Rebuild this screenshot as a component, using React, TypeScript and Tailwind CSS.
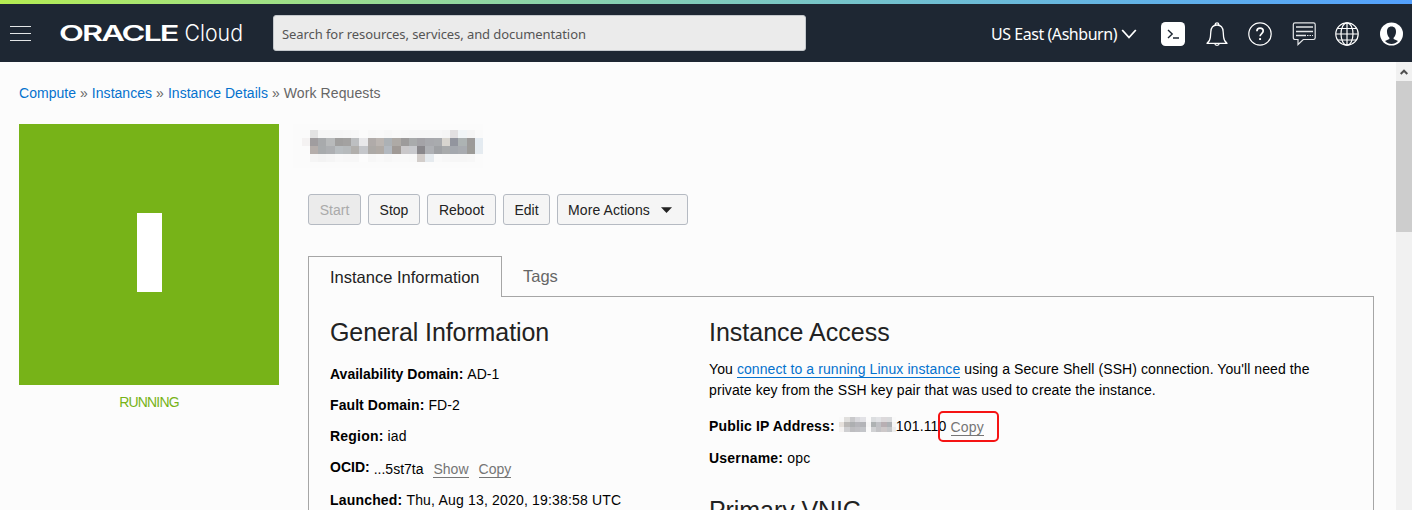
import React from "react";

const sans = "font-['Liberation_Sans',Arial,sans-serif]";

type Cell = [number, number, string];

const titleRows: string[][] = [
  ["#e3e3e3", "#f6f6f6", "#f6f6f6", "#f6f6f6", "#f7f7f7", "#f8f8f8", "#fbfbfb", "#f8f8f8", "#f9f9f9", "#f7f7f7", "#f9f9f9", "#f8f8f8", "#f7f7f7", "#f7f7f7", "#f7f7f7", "#f7f7f7", "#f5f5f5", "#e2e0e1", "#f1f5f7", "#f5f5f5", "#fafafa"],
  ["#a09d9f", "#a8aaac", "#b8babb", "#a09f9e", "#a3a2a1", "#bdbfc1", "#e8e8ea", "#b0aba9", "#bbb5b1", "#acb1b5", "#aeaaa6", "#9d9b9b", "#a9abac", "#a4a3a7", "#a8a9ad", "#a9abae", "#d8d5cf", "#92959e", "#adb3b3", "#9c9a99", "#e4ebf1"],
  ["#b5aeab", "#a8abad", "#adafb2", "#b8bdc0", "#b6babc", "#b1afac", "#c4c6ca", "#aca9a6", "#b0aaa5", "#b2b8bf", "#a09a96", "#cac8ca", "#c8c9cd", "#89878b", "#aeb0b4", "#9fa1a4", "#a8aaab", "#a4a8ae", "#a8abb0", "#9c9b98", "#e5ebf0"],
  ["#f5f5f5", "#f3f3f3", "#f5f5f5", "#f8f8f8", "#f7f7f7", "#f7f7f7", "#fcfcfc", "#f7f7f7", "#f9f9f9", "#f7f7f7", "#f9f9f9", "#f9f9f9", "#f8f8f8", "#d2cdca", "#e5eaee", "#f9f9f9", "#f7f7f7", "#f6f6f6", "#f6f6f6", "#f7f7f7", "#fbfbfb"],
];

const addressRows: string[][] = [
  ["#fafafa", "#e0dfdd", "#c9c9cb", "#d9d9dd", "#e2e2e6", "#fbfbfb", "#dcdee0", "#e2e3e6", "#dcd9db", "#d9dadc", "#fafafa"],
  ["#e6e1dc", "#bbb9b7", "#adafb1", "#b5b5ba", "#b3b4b8", "#f6f6f6", "#aeb2b3", "#c0c1c5", "#b8afb3", "#adb1b5", "#f5f5f5"],
  ["#f5f3f2", "#cfcfd1", "#bdbdc0", "#c0c0c4", "#c3c5c9", "#fafafa", "#d0d1d3", "#c3c3c6", "#cdc8c9", "#c3c5c8", "#ececec"],
];

function Mosaic({ cells, size }: { cells: Cell[]; size: number }) {
  return (
    <g shapeRendering="crispEdges">
      {cells.map(([x, y, c]) => (
        <rect key={`${x}-${y}`} x={x} y={y} width={size} height={size} fill={c} />
      ))}
    </g>
  );
}

function HiddenTitle() {
  const cells: Cell[] = titleRows.flatMap((row, r) =>
    row.map((c, i): Cell => [17 + i * 8.24, 6 + r * 8, c]),
  );
  return (
    <svg className="block" width="190" height="48" viewBox="0 0 190 48">
      <rect x="0" y="0" width="190" height="44" fill="#fbfbfb" />
      <rect x="9" y="14" width="8" height="8" fill="#f4f2f2" />
      <Mosaic cells={cells} size={8.24} />
    </svg>
  );
}

function HiddenAddress() {
  const cells: Cell[] = addressRows.flatMap((row, r) =>
    row.map((c, i): Cell => [i * 5.3, 1 + r * 5, c]),
  );
  return (
    <svg className="block shrink-0" width="57" height="18" viewBox="0 0 57 18">
      <Mosaic cells={cells} size={5.3} />
    </svg>
  );
}

function Logo() {
  return (
    <svg width="190" height="30" viewBox="0 0 190 30" fill="#fff" className="block shrink-0">
      <text x="0" y="23" fontFamily="Inter, sans-serif" fontWeight="600" fontSize="21.500" letterSpacing="-1.300" textLength="118.500" lengthAdjust="spacingAndGlyphs">ORACLE</text>
      <text x="125.500" y="23" fontFamily="Inter, sans-serif" fontWeight="300" fontSize="22.500" textLength="58.500" lengthAdjust="spacingAndGlyphs">Cloud</text>
    </svg>
  );
}

function HeaderIcons() {
  return (
    <div className="flex items-center gap-[19.5px] pt-px">
      <svg width="24" height="24" viewBox="0 0 24 24" fill="none">
        <rect width="24" height="24" rx="4.5" fill="#fff" />
        <path d="M7 8l4.2 4L7 16M12 16h6" stroke="#1e2733" strokeWidth="1.4" />
      </svg>
      <svg width="24" height="24" viewBox="0 0 24 24" fill="none" stroke="#fff" strokeWidth="1.3" strokeLinejoin="round">
        <path d="M2 21.3c2.1-1.5 3.1-3.2 3.4-6.3l.4-5C6 5.800 8.200 3 12 3s6 2.800 6.200 7l.4 5c.3 3.100 1.300 4.800 3.400 6.300z" />
        <path d="M10.300 3.100V2.300c0-2 3.400-2 3.400 0v.8M9.800 21.500c.2 2.400 4.200 2.400 4.400 0" />
      </svg>
      <svg width="24" height="24" viewBox="0 0 24 24" fill="none" stroke="#fff">
        <circle cx="12" cy="12" r="11.200" strokeWidth="1.200" />
        <path d="M8.900 9.300c0-4.200 6.300-4 6.300-.2 0 2.500-3.100 2.500-3.100 5.200" strokeWidth="1.700" />
        <path d="M12.100 16.100v1.900" strokeWidth="1.900" />
      </svg>
      <svg width="24" height="24" viewBox="0 0 24 24" fill="none" stroke="#e4e6e8">
        <path d="M3 .8h18.500c1 0 1.700.7 1.700 1.700v13.300c0 1-.7 1.700-1.700 1.700H11.300L6 22.500v-5H3c-1 0-1.700-.7-1.700-1.700V2.500C1.300 1.500 2 .8 3 .8z" strokeWidth="1.200" />
        <path d="M4 5h17M4 9.500h17M4 13.500h10" strokeWidth="1.300" />
        <path d="M15 13.500h6" strokeWidth="1.200" strokeDasharray="1.500 1" />
      </svg>
      <svg width="24" height="24" viewBox="0 0 24 24" fill="none" stroke="#fff" strokeWidth="1.200">
        <circle cx="12" cy="12" r="11.200" />
        <ellipse cx="12" cy="12" rx="6" ry="11.200" />
        <path d="M12 1v22M3 6.500h18M1 12h22M3 18h18" />
      </svg>
      <svg width="24" height="24" viewBox="0 0 24 24" fill="none">
        <circle cx="12.500" cy="12" r="11.500" fill="#fff" />
        <path d="M12.500 4.500c3 0 4.700 2.200 4.500 5.500-.1 2.500-1 4.600-2.400 5.700v1.200l4.400 2.200c-3.500 4-9.500 4-13 0l4.400-2.200v-1.200C9 14.600 8.100 12.500 8 10c-.2-3.300 1.500-5.500 4.500-5.500z" fill="#1e2733" />
      </svg>
    </div>
  );
}

function Header() {
  return (
    <header className="flex h-[58px] items-center bg-[#1e2733] text-white">
      <svg width="22" height="18" viewBox="0 0 22 18" className="ml-[10px] shrink-0" stroke="#e3e5e6" strokeWidth="1.200">
        <path d="M0 2.500h21M0 9.500h21M0 16.500h21" />
      </svg>
      <div className="ml-[27px] w-[214px]"><Logo /></div>
      <div className="flex h-9 w-[533px] items-center rounded-[3px] border border-[#c4c8cc] bg-[#ebebeb] pl-2 pt-[4px] font-['Noto_Sans',sans-serif] text-[13px] tracking-[-0.08px] text-[#555]">
        Search for resources, services, and documentation
      </div>
      <div className="ml-[185px] flex w-[170px] items-center gap-[4px] whitespace-nowrap pt-[2px] font-['Noto_Sans',sans-serif] text-[16px] tracking-[-0.45px]">
        US East (Ashburn)
        <svg width="16" height="10" viewBox="0 0 15 10" fill="none" stroke="#fff" strokeWidth="1.800" className="shrink-0">
          <path d="M.7 1l6.800 7.500L14.300 1" />
        </svg>
      </div>
      <HeaderIcons />
    </header>
  );
}

function Action({ className, children }: { className: string; children: React.ReactNode }) {
  return (
    <button className={`flex h-[31px] items-center justify-center rounded-[3px] border border-[#b5bac2] pt-px text-[14px] ${className}`}>
      {children}
    </button>
  );
}

function Field({ label, children, className }: { label: string; children: React.ReactNode; className: string }) {
  return (
    <div className={`flex h-[21px] whitespace-pre text-[14px] leading-[21px] text-black ${className}`}>
      <b className="mr-[4px]">{label}:</b>
      {children}
    </div>
  );
}

function TextButton({ children }: { children: string }) {
  return <span><a className="border-b border-[#757575] text-[#757575]">{children}</a></span>;
}

export default function App() {
  return (
    <div className={`flex h-[510px] w-[1412px] flex-col overflow-hidden bg-[#fcfcfc] ${sans}`}>
      <div className="h-1 shrink-0 bg-linear-to-r from-[#b4ec51] to-[#53a0fd]" />
      <Header />
      <div className="flex min-h-0 flex-1">
        <main className="min-w-0 flex-1 overflow-hidden pl-[19px]">
          <nav className="mt-[21px] flex gap-1 text-[14px] leading-[20px] tracking-[0.03px] text-[#666]">
            <a className="text-[#0572ce]">Compute</a>»
            <a className="text-[#0572ce]">Instances</a>»
            <a className="text-[#0572ce]">Instance Details</a>»
            <span className="tracking-[0.1px]">Work Requests</span>
          </nav>
          <div className="mt-[21px] flex">
            <div className="w-[260px] shrink-0">
              <div className="flex h-[260.500px] items-start justify-center bg-[#77b318] pt-[89px]">
                <div className="h-[79px] w-[25px] bg-white" />
              </div>
              <p className="mt-[7.5px] text-center text-[14px] leading-[20px] tracking-[-0.8px] text-[#77b318]">RUNNING</p>
            </div>
            <div className="ml-[29px] w-[1066px] shrink-0">
              <div className="-ml-[15px] h-[70px]"><HiddenTitle /></div>
              <div className="flex gap-[7px] text-[#222]">
                <Action className="w-[53px] bg-[#ebebeb] text-[#aaa]">Start</Action>
                <Action className="w-[52px] bg-[#f5f5f5]">Stop</Action>
                <Action className="w-[69px] bg-[#f5f5f5]">Reboot</Action>
                <Action className="w-[47px] bg-[#f5f5f5]">Edit</Action>
                <Action className="w-[131px] gap-[11px] bg-[#f5f5f5] pr-[5px] tracking-[0.08px]">
                  More Actions
                  <svg width="11" height="6" viewBox="0 0 11 6"><path d="M0 .3h11L5.500 6z" fill="#222" /></svg>
                </Action>
              </div>
              <div className="mt-[31px] flex h-[41px] text-[16.500px]">
                <div className="w-[194px] border border-b-0 border-[#a6a6a6] pl-[21px] leading-[41px] text-[#222]">Instance Information</div>
                <div className="flex-1 border-b border-[#a6a6a6] pl-[21px] leading-[41px] text-[#666]">Tags</div>
              </div>
              <div className="flex h-[300px] border-x border-[#a6a6a6] pl-[21px]">
                <section className="w-[379px]">
                  <h2 className="mt-[19px] text-[25px] leading-[32px] tracking-[-0.1px] text-[#222]">General Information</h2>
                  <Field label="Availability Domain" className="mt-[16px]">AD-1</Field>
                  <Field label="Fault Domain" className="mt-[10px] tracking-[0.08px]">FD-2</Field>
                  <Field label="Region" className="mt-[10px] tracking-[0.2px]">iad</Field>
                  <Field label="OCID" className="mt-[10px]">
                    <span className="flex gap-[10px] pt-[2px]">...5st7ta<TextButton>Show</TextButton><TextButton>Copy</TextButton></span>
                  </Field>
                  <Field label="Launched" className="mt-[12px] tracking-[0.18px]">Thu, Aug 13, 2020, 19:38:58 UTC</Field>
                </section>
                <section className="w-[640px]">
                  <h2 className="mt-[19px] text-[25px] leading-[32px] text-[#222]">Instance Access</h2>
                  <p className="mt-[11px] w-[620px] text-[14px] leading-[21px] tracking-[0.09px] text-black">
                    You <a className="border-b border-[#0572ce] text-[#0572ce]">connect to a running Linux instance</a> using a Secure Shell (SSH) connection. You'll need the private key from the SSH key pair that was used to create the instance.
                  </p>
                  <Field label="Public IP Address" className="mt-[15px] tracking-[0.16px]">
                    <HiddenAddress />
                    <span className="relative mr-1">
                      101.110
                      <span className="absolute left-[42px] top-[-5px] h-[31px] w-[61px] rounded-[5px] border-2 border-[#f51414]" />
                    </span>
                    <span className="pt-px"><TextButton>Copy</TextButton></span>
                  </Field>
                  <Field label="Username" className="mt-[11px] tracking-[0.2px]">opc</Field>
                  <h2 className="mt-[25px] text-[25px] leading-[32px] tracking-[-0.08px] text-[#222]">Primary VNIC</h2>
                </section>
              </div>
            </div>
          </div>
        </main>
        <aside className="flex w-4 shrink-0 flex-col bg-[#f1f1f1]">
          <div className="flex h-[19px] items-center justify-center">
            <svg width="8" height="6" viewBox="0 0 8 6" fill="none" stroke="#505050" strokeWidth="2"><path d="M.7 5L4 1.700 7.300 5" /></svg>
          </div>
          <div className="h-[151px] bg-[#cdcdcd]" />
        </aside>
      </div>
    </div>
  );
}
